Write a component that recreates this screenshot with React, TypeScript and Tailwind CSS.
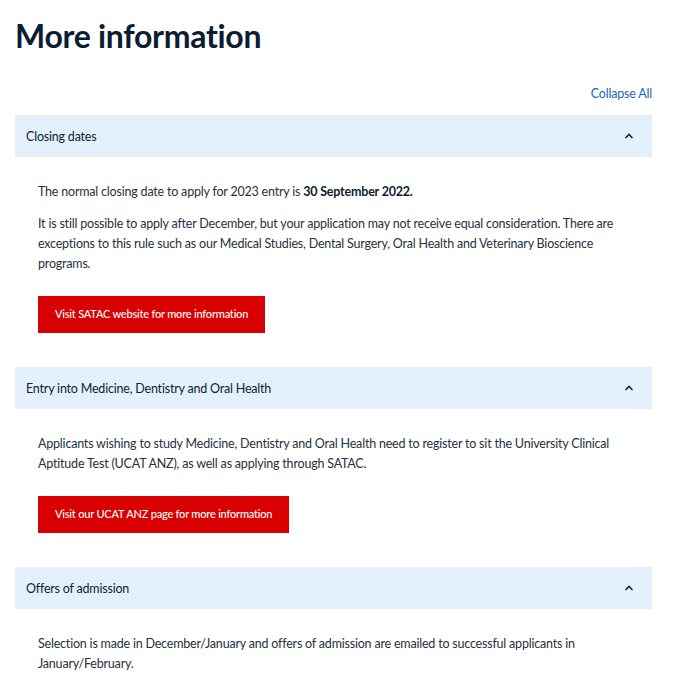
import { ReactNode } from "react";

type SectionProps = {
  title: string;
  children: ReactNode;
};

function Chevron() {
  return (
    <svg width="10" height="6" viewBox="0 0 10 6" className="text-[#14253a]">
      <path
        d="M1.5 5L5 1.5L8.5 5"
        fill="none"
        stroke="currentColor"
        strokeWidth="1.6"
      />
    </svg>
  );
}

function Section({ title, children }: SectionProps) {
  return (
    <div>
      <div className="flex h-[42px] items-center justify-between bg-[#e4f1fc] pl-[11px] pr-[18px]">
        <span className="pt-[3px] text-[12.5px] text-[#0f1e30]">{title}</span>
        <Chevron />
      </div>
      <div className="px-[23px] pt-[25px] pb-[34px] text-[12.5px] leading-[20px] text-[#26313d]">
        {children}
      </div>
    </div>
  );
}

function RedButton({ label }: { label: string }) {
  return (
    <a className="mt-[22px] inline-flex h-[37px] items-center bg-[#d80000] px-[17px] text-[11px] font-medium text-white">
      {label}
    </a>
  );
}

export default function App() {
  return (
    <div className="bg-white pl-[15px] pr-[26px] pt-[14px] font-['Lato',sans-serif] tracking-[-0.2px]">
      <h1 className="text-[32px] font-bold leading-[44px] text-[#0b1d31] tracking-[-0.3px]">
        More information
      </h1>
      <div className="mt-[27px] flex justify-end">
        <button className="text-[12.5px] text-[#1a67b4]">Collapse All</button>
      </div>
      <div className="mt-[11px]">
        <Section title="Closing dates">
          <p>
            The normal closing date to apply for 2023 entry is{" "}
            <strong className="font-bold text-[#0b1d31]">30 September 2022.</strong>
          </p>
          <p className="mt-[12px]">
            It is still possible to apply after December, but your application
            may not receive equal consideration. There are exceptions to this
            rule such as our Medical Studies, Dental Surgery, Oral Health and
            Veterinary Bioscience programs.
          </p>
          <RedButton label="Visit SATAC website for more information" />
        </Section>
        <Section title="Entry into Medicine, Dentistry and Oral Health">
          <p>
            Applicants wishing to study Medicine, Dentistry and Oral Health need
            to register to sit the University Clinical Aptitude Test (UCAT ANZ),
            as well as applying through SATAC.
          </p>
          <RedButton label="Visit our UCAT ANZ page for more information" />
        </Section>
        <Section title="Offers of admission">
          <p>
            Selection is made in December/January and offers of admission are
            emailed to successful applicants in January/February.
          </p>
        </Section>
      </div>
    </div>
  );
}
